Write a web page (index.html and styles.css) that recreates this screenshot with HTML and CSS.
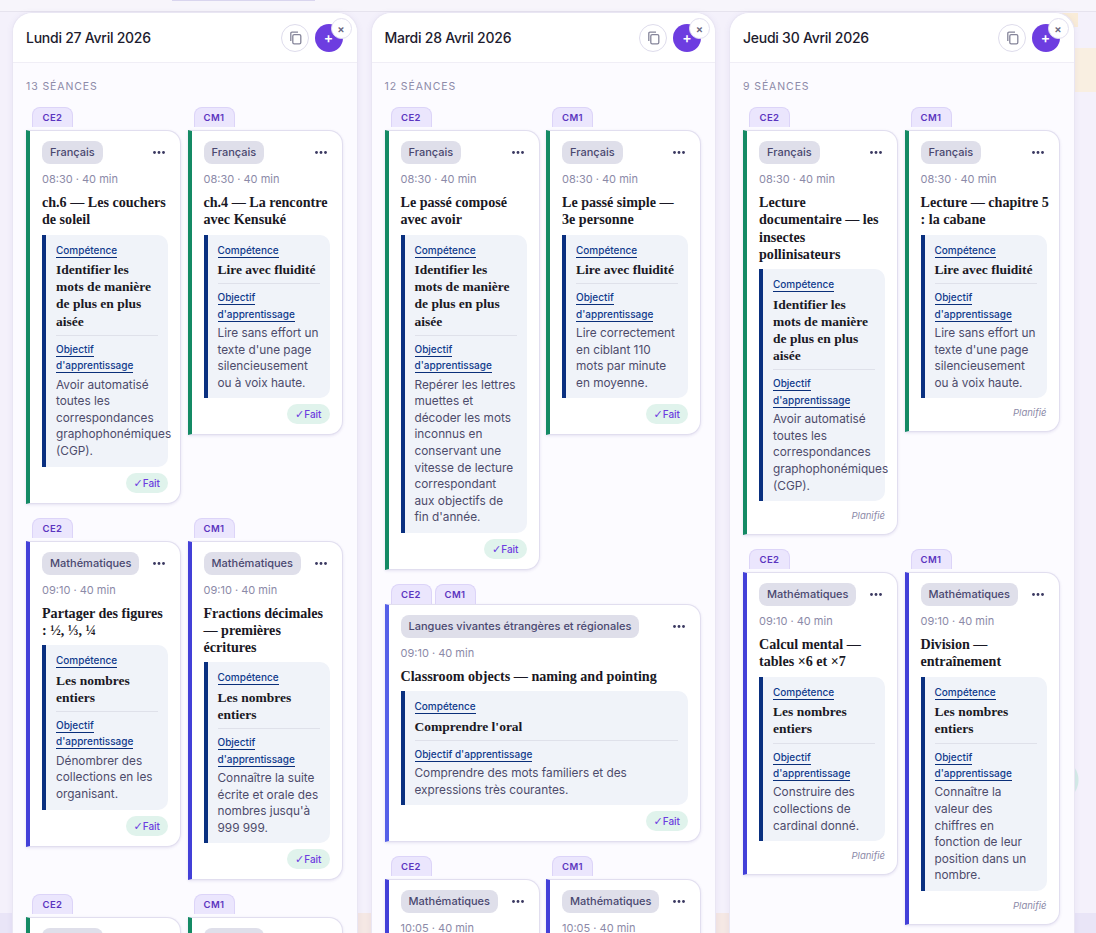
FILE: index.html
```html
<!DOCTYPE html>
<html lang="fr">
<head>
    <meta charset="UTF-8">
    <title>Semaine</title>
    <link rel="stylesheet" href="styles.css">
</head>
<body>
<div class="topbar"><div class="topbar-tab"></div></div>
<div class="board">

    <!-- lundi -->
    <div class="day">
        <div class="day-head">
            <h2 class="day-title">Lundi 27 Avril 2026</h2>
            <button class="btn-copy"><svg width="14" height="14" viewBox="0 0 14 14" fill="none" stroke="#85859a" stroke-width="1.3"><path d="M2.8 10V2.4a1.2 1.2 0 0 1 1.2-1.2h6"/><rect x="4.8" y="3.6" width="8" height="9.2" rx="1.4"/></svg></button>
            <button class="btn-add">+</button>
            <span class="btn-close">×</span>
        </div>
        <div class="day-body">
            <div class="count">13 séances</div>
            <div class="slots">
                <div class="slot">
                    <div class="tabs"><span class="tab">CE2</span></div>
                    <div class="card green">
                        <div class="card-top"><span class="subject">Français</span><svg class="dots" width="12" height="3" viewBox="0 0 12 3"><circle cx="1.5" cy="1.5" r="1.4"/><circle cx="6" cy="1.5" r="1.4"/><circle cx="10.5" cy="1.5" r="1.4"/></svg></div>
                        <div class="time">08:30 · 40 min</div>
                        <h3 class="title"><span class="nowrap">ch.6 — Les couchers</span> de soleil</h3>
                        <div class="box">
                            <div class="label"><span>Compétence</span></div>
                            <div class="skill">Identifier les mots de manière de plus en plus aisée</div>
                            <div class="label second"><span>Objectif d'apprentissage</span></div>
                            <div class="goal">Avoir automatisé toutes les correspondances <span class="nowrap">graphophonémiques</span> (CGP).</div>
                        </div>
                        <div class="foot"><span class="done"><span class="check">✓</span>Fait</span></div>
                    </div>
                </div>
                <div class="slot">
                    <div class="tabs"><span class="tab">CM1</span></div>
                    <div class="card green">
                        <div class="card-top"><span class="subject">Français</span><svg class="dots" width="12" height="3" viewBox="0 0 12 3"><circle cx="1.5" cy="1.5" r="1.4"/><circle cx="6" cy="1.5" r="1.4"/><circle cx="10.5" cy="1.5" r="1.4"/></svg></div>
                        <div class="time">08:30 · 40 min</div>
                        <h3 class="title"><span class="nowrap">ch.4 — La rencontre</span> avec Kensuké</h3>
                        <div class="box">
                            <div class="label"><span>Compétence</span></div>
                            <div class="skill">Lire avec fluidité</div>
                            <div class="label second"><span>Objectif d'apprentissage</span></div>
                            <div class="goal">Lire sans effort un texte d'une page silencieusement ou à voix haute.</div>
                        </div>
                        <div class="foot"><span class="done"><span class="check">✓</span>Fait</span></div>
                    </div>
                </div>
                <div class="slot">
                    <div class="tabs"><span class="tab">CE2</span></div>
                    <div class="card blue">
                        <div class="card-top"><span class="subject">Mathématiques</span><svg class="dots" width="12" height="3" viewBox="0 0 12 3"><circle cx="1.5" cy="1.5" r="1.4"/><circle cx="6" cy="1.5" r="1.4"/><circle cx="10.5" cy="1.5" r="1.4"/></svg></div>
                        <div class="time">09:10 · 40 min</div>
                        <h3 class="title">Partager des figures : ½, ⅓, ¼</h3>
                        <div class="box">
                            <div class="label"><span>Compétence</span></div>
                            <div class="skill">Les nombres entiers</div>
                            <div class="label second"><span>Objectif d'apprentissage</span></div>
                            <div class="goal">Dénombrer des collections en les organisant.</div>
                        </div>
                        <div class="foot"><span class="done"><span class="check">✓</span>Fait</span></div>
                    </div>
                </div>
                <div class="slot">
                    <div class="tabs"><span class="tab">CM1</span></div>
                    <div class="card blue">
                        <div class="card-top"><span class="subject">Mathématiques</span><svg class="dots" width="12" height="3" viewBox="0 0 12 3"><circle cx="1.5" cy="1.5" r="1.4"/><circle cx="6" cy="1.5" r="1.4"/><circle cx="10.5" cy="1.5" r="1.4"/></svg></div>
                        <div class="time">09:10 · 40 min</div>
                        <h3 class="title">Fractions décimales — premières écritures</h3>
                        <div class="box">
                            <div class="label"><span>Compétence</span></div>
                            <div class="skill">Les nombres entiers</div>
                            <div class="label second"><span>Objectif d'apprentissage</span></div>
                            <div class="goal">Connaître la suite écrite et orale des nombres jusqu'à 999 999.</div>
                        </div>
                        <div class="foot"><span class="done"><span class="check">✓</span>Fait</span></div>
                    </div>
                </div>
                <div class="slot">
                    <div class="tabs"><span class="tab">CE2</span></div>
                    <div class="card green">
                        <div class="card-top"><span class="subject">Français</span></div>
                    </div>
                </div>
                <div class="slot">
                    <div class="tabs"><span class="tab">CM1</span></div>
                    <div class="card green">
                        <div class="card-top"><span class="subject">Français</span></div>
                    </div>
                </div>
            </div>
        </div>
    </div>

    <!-- mardi -->
    <div class="day">
        <div class="day-head">
            <h2 class="day-title">Mardi 28 Avril 2026</h2>
            <button class="btn-copy"><svg width="14" height="14" viewBox="0 0 14 14" fill="none" stroke="#85859a" stroke-width="1.3"><path d="M2.8 10V2.4a1.2 1.2 0 0 1 1.2-1.2h6"/><rect x="4.8" y="3.6" width="8" height="9.2" rx="1.4"/></svg></button>
            <button class="btn-add">+</button>
            <span class="btn-close">×</span>
        </div>
        <div class="day-body">
            <div class="count">12 séances</div>
            <div class="slots">
                <div class="slot">
                    <div class="tabs"><span class="tab">CE2</span></div>
                    <div class="card green">
                        <div class="card-top"><span class="subject">Français</span><svg class="dots" width="12" height="3" viewBox="0 0 12 3"><circle cx="1.5" cy="1.5" r="1.4"/><circle cx="6" cy="1.5" r="1.4"/><circle cx="10.5" cy="1.5" r="1.4"/></svg></div>
                        <div class="time">08:30 · 40 min</div>
                        <h3 class="title">Le passé composé avec avoir</h3>
                        <div class="box">
                            <div class="label"><span>Compétence</span></div>
                            <div class="skill">Identifier les mots de manière de plus en plus aisée</div>
                            <div class="label second"><span>Objectif d'apprentissage</span></div>
                            <div class="goal">Repérer les lettres muettes et décoder les mots inconnus en conservant une vitesse de lecture correspondant aux objectifs de fin d'année.</div>
                        </div>
                        <div class="foot"><span class="done"><span class="check">✓</span>Fait</span></div>
                    </div>
                </div>
                <div class="slot">
                    <div class="tabs"><span class="tab">CM1</span></div>
                    <div class="card green">
                        <div class="card-top"><span class="subject">Français</span><svg class="dots" width="12" height="3" viewBox="0 0 12 3"><circle cx="1.5" cy="1.5" r="1.4"/><circle cx="6" cy="1.5" r="1.4"/><circle cx="10.5" cy="1.5" r="1.4"/></svg></div>
                        <div class="time">08:30 · 40 min</div>
                        <h3 class="title">Le passé simple — 3e personne</h3>
                        <div class="box">
                            <div class="label"><span>Compétence</span></div>
                            <div class="skill">Lire avec fluidité</div>
                            <div class="label second"><span>Objectif d'apprentissage</span></div>
                            <div class="goal">Lire correctement en ciblant 110 mots par minute en moyenne.</div>
                        </div>
                        <div class="foot"><span class="done"><span class="check">✓</span>Fait</span></div>
                    </div>
                </div>
                <div class="slot wide">
                    <div class="tabs"><span class="tab">CE2</span><span class="tab">CM1</span></div>
                    <div class="card indigo">
                        <div class="card-top"><span class="subject">Langues vivantes étrangères et régionales</span><svg class="dots" width="12" height="3" viewBox="0 0 12 3"><circle cx="1.5" cy="1.5" r="1.4"/><circle cx="6" cy="1.5" r="1.4"/><circle cx="10.5" cy="1.5" r="1.4"/></svg></div>
                        <div class="time">09:10 · 40 min</div>
                        <h3 class="title">Classroom objects — naming and pointing</h3>
                        <div class="box">
                            <div class="label"><span>Compétence</span></div>
                            <div class="skill">Comprendre l'oral</div>
                            <div class="label second"><span>Objectif d'apprentissage</span></div>
                            <div class="goal">Comprendre des mots familiers et des expressions très courantes.</div>
                        </div>
                        <div class="foot"><span class="done"><span class="check">✓</span>Fait</span></div>
                    </div>
                </div>
                <div class="slot">
                    <div class="tabs"><span class="tab">CE2</span></div>
                    <div class="card blue">
                        <div class="card-top"><span class="subject">Mathématiques</span><svg class="dots" width="12" height="3" viewBox="0 0 12 3"><circle cx="1.5" cy="1.5" r="1.4"/><circle cx="6" cy="1.5" r="1.4"/><circle cx="10.5" cy="1.5" r="1.4"/></svg></div>
                        <div class="time">10:05 · 40 min</div>
                    </div>
                </div>
                <div class="slot">
                    <div class="tabs"><span class="tab">CM1</span></div>
                    <div class="card blue">
                        <div class="card-top"><span class="subject">Mathématiques</span><svg class="dots" width="12" height="3" viewBox="0 0 12 3"><circle cx="1.5" cy="1.5" r="1.4"/><circle cx="6" cy="1.5" r="1.4"/><circle cx="10.5" cy="1.5" r="1.4"/></svg></div>
                        <div class="time">10:05 · 40 min</div>
                    </div>
                </div>
            </div>
        </div>
    </div>

    <!-- jeudi -->
    <div class="day">
        <div class="day-head">
            <h2 class="day-title">Jeudi 30 Avril 2026</h2>
            <button class="btn-copy"><svg width="14" height="14" viewBox="0 0 14 14" fill="none" stroke="#85859a" stroke-width="1.3"><path d="M2.8 10V2.4a1.2 1.2 0 0 1 1.2-1.2h6"/><rect x="4.8" y="3.6" width="8" height="9.2" rx="1.4"/></svg></button>
            <button class="btn-add">+</button>
            <span class="btn-close">×</span>
        </div>
        <div class="day-body">
            <div class="count">9 séances</div>
            <div class="slots">
                <div class="slot">
                    <div class="tabs"><span class="tab">CE2</span></div>
                    <div class="card green">
                        <div class="card-top"><span class="subject">Français</span><svg class="dots" width="12" height="3" viewBox="0 0 12 3"><circle cx="1.5" cy="1.5" r="1.4"/><circle cx="6" cy="1.5" r="1.4"/><circle cx="10.5" cy="1.5" r="1.4"/></svg></div>
                        <div class="time">08:30 · 40 min</div>
                        <h3 class="title">Lecture documentaire — les insectes pollinisateurs</h3>
                        <div class="box">
                            <div class="label"><span>Compétence</span></div>
                            <div class="skill">Identifier les mots de manière de plus en plus aisée</div>
                            <div class="label second"><span>Objectif d'apprentissage</span></div>
                            <div class="goal">Avoir automatisé toutes les correspondances <span class="nowrap">graphophonémiques</span> (CGP).</div>
                        </div>
                        <div class="foot"><span class="planned">Planifié</span></div>
                    </div>
                </div>
                <div class="slot">
                    <div class="tabs"><span class="tab">CM1</span></div>
                    <div class="card green">
                        <div class="card-top"><span class="subject">Français</span><svg class="dots" width="12" height="3" viewBox="0 0 12 3"><circle cx="1.5" cy="1.5" r="1.4"/><circle cx="6" cy="1.5" r="1.4"/><circle cx="10.5" cy="1.5" r="1.4"/></svg></div>
                        <div class="time">08:30 · 40 min</div>
                        <h3 class="title"><span class="nowrap">Lecture — chapitre 5</span> : la cabane</h3>
                        <div class="box">
                            <div class="label"><span>Compétence</span></div>
                            <div class="skill">Lire avec fluidité</div>
                            <div class="label second"><span>Objectif d'apprentissage</span></div>
                            <div class="goal">Lire sans effort un texte d'une page silencieusement ou à voix haute.</div>
                        </div>
                        <div class="foot"><span class="planned">Planifié</span></div>
                    </div>
                </div>
                <div class="slot">
                    <div class="tabs"><span class="tab">CE2</span></div>
                    <div class="card blue">
                        <div class="card-top"><span class="subject">Mathématiques</span><svg class="dots" width="12" height="3" viewBox="0 0 12 3"><circle cx="1.5" cy="1.5" r="1.4"/><circle cx="6" cy="1.5" r="1.4"/><circle cx="10.5" cy="1.5" r="1.4"/></svg></div>
                        <div class="time">09:10 · 40 min</div>
                        <h3 class="title">Calcul mental — tables ×6 et ×7</h3>
                        <div class="box">
                            <div class="label"><span>Compétence</span></div>
                            <div class="skill">Les nombres entiers</div>
                            <div class="label second"><span>Objectif d'apprentissage</span></div>
                            <div class="goal">Construire des collections de cardinal donné.</div>
                        </div>
                        <div class="foot"><span class="planned">Planifié</span></div>
                    </div>
                </div>
                <div class="slot">
                    <div class="tabs"><span class="tab">CM1</span></div>
                    <div class="card blue">
                        <div class="card-top"><span class="subject">Mathématiques</span><svg class="dots" width="12" height="3" viewBox="0 0 12 3"><circle cx="1.5" cy="1.5" r="1.4"/><circle cx="6" cy="1.5" r="1.4"/><circle cx="10.5" cy="1.5" r="1.4"/></svg></div>
                        <div class="time">09:10 · 40 min</div>
                        <h3 class="title">Division — entraînement</h3>
                        <div class="box">
                            <div class="label"><span>Compétence</span></div>
                            <div class="skill">Les nombres entiers</div>
                            <div class="label second"><span>Objectif d'apprentissage</span></div>
                            <div class="goal">Connaître la<br>valeur des chiffres en fonction de leur position dans un nombre.</div>
                        </div>
                        <div class="foot"><span class="planned">Planifié</span></div>
                    </div>
                </div>
            </div>
        </div>
    </div>
</div>
</body>
</html>
```

FILE: styles.css
```css
html, body {
    margin: 0;
    padding: 0;
    height: 100%;
    overflow: hidden;
}
body {
    font-family: "Inter", "Noto Sans", sans-serif;
    color: #1d1b2e;
    background:
        radial-gradient(circle at 1057px 780px, #d5ece8 0, #d5ece8 21px, transparent 22px),
        linear-gradient(#f9ecd8, #f9ecd8) 1056px 13px / 22px 14px no-repeat,
        linear-gradient(#f9efe1, #f9efe1) right 48px / 21px 44px no-repeat,
        linear-gradient(#f5e8e4, #f5e8e4) 358px 913px / 13px 20px no-repeat,
        linear-gradient(#f5e8e4, #f5e8e4) 716px 913px / 13px 20px no-repeat,
        linear-gradient(#e9e5f7, #e9e5f7) left 913px / 100% 20px no-repeat,
        #f4f1fb;
}
.topbar {
    height: 12px;
    background: #f7f5fb;
    border-bottom: 1px solid #e6e3ee;
    box-sizing: border-box;
}
.topbar-tab {
    width: 143px;
    height: 1px;
    margin-left: 172px;
    background: #d9d5ee;
}
.board {
    display: flex;
    gap: 13px;
    padding-left: 12px;
}
.day {
    position: relative;
    flex: none;
    width: 345.5px;
    height: 960px;
    box-sizing: border-box;
    background: #fcfbff;
    border: 1px solid #e9e6f3;
    border-bottom: 0;
    border-radius: 20px 20px 0 0;
    box-shadow: 0 1px 6px rgba(90, 80, 160, .08);
}
.day-head {
    display: flex;
    align-items: center;
    gap: 6px;
    height: 49px;
    padding: 0 14px 0 13px;
    background: #fff;
    border-bottom: 1px solid #f0eef6;
    border-radius: 20px 20px 0 0;
}
.day-title {
    flex: 1;
    margin: 0;
    font-size: 14px;
    font-weight: 500;
    letter-spacing: -.25px;
}
.btn-copy, .btn-add {
    display: flex;
    align-items: center;
    justify-content: center;
    width: 28px;
    height: 28px;
    padding: 0;
    border-radius: 50%;
    box-sizing: border-box;
}
.btn-copy {
    background: #fff;
    border: 1px solid #dedcec;
}
.btn-add {
    background: #6d3de0;
    border: 0;
    color: #fff;
    font-family: inherit;
    font-size: 14px;
    font-weight: 600;
}
.btn-close {
    position: absolute;
    top: 5px;
    right: 5px;
    display: flex;
    align-items: center;
    justify-content: center;
    width: 21px;
    height: 21px;
    box-sizing: border-box;
    background: #fff;
    border: 1px solid #e2dff0;
    border-radius: 50%;
    color: #6a6880;
    font-size: 11px;
    font-weight: 600;
}
.day-body {
    padding: 16px 14px 0 13px;
}
.count {
    font-size: 10.5px;
    line-height: 16px;
    letter-spacing: .9px;
    text-transform: uppercase;
    color: #8c8aa8;
    margin-bottom: 12px;
}
.slots {
    display: grid;
    grid-template-columns: 155px 155px;
    column-gap: 6.5px;
    row-gap: 14px;
    align-items: start;
}
.slot.wide {
    grid-column: 1 / 3;
}
.tabs {
    display: flex;
    gap: 3px;
    padding-left: 6px;
    margin-bottom: 3px;
}
.slot.wide .tabs {
    margin-bottom: 0;
}
.tab {
    width: 41px;
    height: 20px;
    line-height: 19px;
    box-sizing: border-box;
    text-align: center;
    background: #ebe6fd;
    border: 1px solid #dcd4f8;
    border-bottom: 0;
    border-radius: 8px 8px 0 0;
    color: #5b35c0;
    font-size: 9.5px;
    font-weight: 600;
    letter-spacing: .4px;
}
.card {
    box-sizing: border-box;
    padding: 10px 12px;
    background: #fff;
    border: 1px solid #e1deef;
    border-left: 4px solid #148a64;
    border-radius: 0 14px 14px 0;
    box-shadow: 0 1px 3px rgba(90, 80, 160, .14);
}
.card.green { border-left-color: #148a64; }
.card.blue { border-left-color: #4340d8; }
.card.indigo { border-left-color: #5560e8; }
.card-top {
    display: flex;
    align-items: center;
    justify-content: space-between;
    padding-right: 3px;
}
.subject {
    padding: 0 8px;
    height: 23px;
    line-height: 23px;
    background: #dfdfea;
    border-radius: 8px;
    color: #4a4870;
    font-size: 11px;
    font-weight: 500;
    white-space: nowrap;
}
.dots {
    flex: none;
    fill: #3a3860;
}
.time {
    margin-top: 7px;
    font-size: 11px;
    line-height: 16px;
    color: #8c8aa8;
}
.title {
    margin: 7px 0 6px;
    font-family: "Liberation Serif", serif;
    font-size: 14.1px;
    line-height: 17.3px;
    font-weight: 700;
    color: #1a1824;
}
.box {
    padding: 7px 10px;
    background: #f0f3f9;
    border-left: 4px solid #0a3080;
    border-radius: 0 10px 10px 0;
}
.label {
    font-size: 10px;
    line-height: 16.4px;
    font-weight: 500;
    color: #0f3a8c;
}
.label span {
    padding-bottom: 1px;
    border-bottom: 1px solid #0a2f7a;
}
.label.second {
    margin-top: 5px;
    padding-top: 5px;
    border-top: 1px solid #dfe1ea;
}
.skill {
    margin-top: 3px;
    font-family: "Liberation Serif", serif;
    font-size: 13.5px;
    line-height: 17.2px;
    font-weight: 700;
    color: #1a1824;
}
.goal {
    margin-top: 3px;
    font-size: 11.8px;
    line-height: 16.6px;
    color: #4d4b6b;
}
.nowrap {
    white-space: nowrap;
}
.foot {
    display: flex;
    justify-content: flex-end;
    margin-top: 6px;
}
.done {
    padding: 0 8px;
    height: 20px;
    line-height: 20px;
    background: #e0f3ec;
    border-radius: 10px;
    color: #6d3de0;
    font-size: 10px;
    font-weight: 500;
}
.check {
    font-family: "DejaVu Sans", sans-serif;
    font-size: 11px;
    font-weight: 700;
}
.planned {
    height: 17px;
    line-height: 17px;
    font-size: 9.5px;
    font-style: italic;
    color: #8c8aa8;
}
```
